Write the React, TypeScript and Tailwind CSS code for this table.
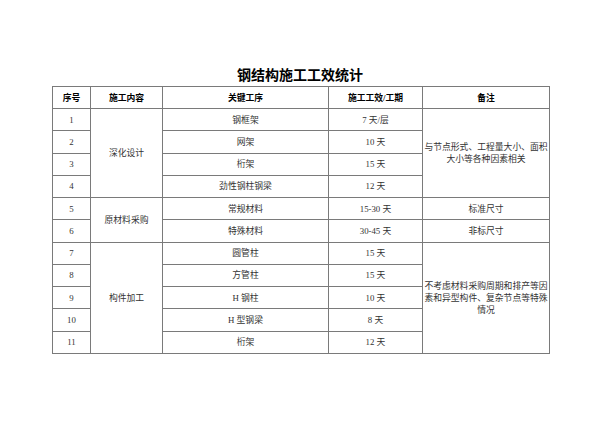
const rows: { no: string; step: string; time: string }[] = [
  { no: '1', step: '钢框架', time: '7 天/层' },
  { no: '2', step: '网架', time: '10 天' },
  { no: '3', step: '桁架', time: '15 天' },
  { no: '4', step: '劲性钢柱钢梁', time: '12 天' },
  { no: '5', step: '常规材料', time: '15-30 天' },
  { no: '6', step: '特殊材料', time: '30-45 天' },
  { no: '7', step: '圆管柱', time: '15 天' },
  { no: '8', step: '方管柱', time: '15 天' },
  { no: '9', step: 'H 钢柱', time: '10 天' },
  { no: '10', step: 'H 型钢梁', time: '8 天' },
  { no: '11', step: '桁架', time: '12 天' },
];

const cell = 'border border-[#7a7a7a] text-center align-middle p-0';

export default function App() {
  return (
    <div
      className="w-[600px] h-[424px] bg-white flex flex-col items-center text-[#333]"
      style={{ fontFamily: '"Liberation Serif", "Noto Sans CJK SC", serif' }}
    >
      <h1 className="mt-[65px] h-[21px] text-[14px] leading-[21px] font-bold text-black">钢结构施工工效统计</h1>
      <table className="border-collapse table-fixed w-[497px] text-[8.8px] leading-[12px] ml-[2px]">
        <colgroup>
          <col className="w-[38px]" />
          <col className="w-[72px]" />
          <col className="w-[166px]" />
          <col className="w-[94px]" />
          <col className="w-[127px]" />
        </colgroup>
        <thead>
          <tr className="h-[22px] font-bold text-black">
            <th className={cell}>序号</th>
            <th className={cell}>施工内容</th>
            <th className={cell}>关键工序</th>
            <th className={cell}>施工工效/工期</th>
            <th className={cell}>备注</th>
          </tr>
        </thead>
        <tbody>
          {rows.map((r, i) => (
            <tr key={r.no} className="h-[22.25px]">
              <td className={cell}>{r.no}</td>
              {i === 0 && (
                <td className={cell} rowSpan={4}>深化设计</td>
              )}
              {i === 4 && (
                <td className={cell} rowSpan={2}>原材料采购</td>
              )}
              {i === 6 && (
                <td className={cell} rowSpan={5}>构件加工</td>
              )}
              <td className={cell}>{r.step}</td>
              <td className={cell}>{r.time}</td>
              {i === 0 && (
                <td className={cell} rowSpan={4}>
                  与节点形式、工程量大小、面积<br />大小等各种因素相关
                </td>
              )}
              {i === 4 && <td className={cell}>标准尺寸</td>}
              {i === 5 && <td className={cell}>非标尺寸</td>}
              {i === 6 && (
                <td className={cell} rowSpan={5}>
                  不考虑材料采购周期和排产等因<br />素和异型构件、复杂节点等特殊<br />情况
                </td>
              )}
            </tr>
          ))}
        </tbody>
      </table>
    </div>
  );
}
